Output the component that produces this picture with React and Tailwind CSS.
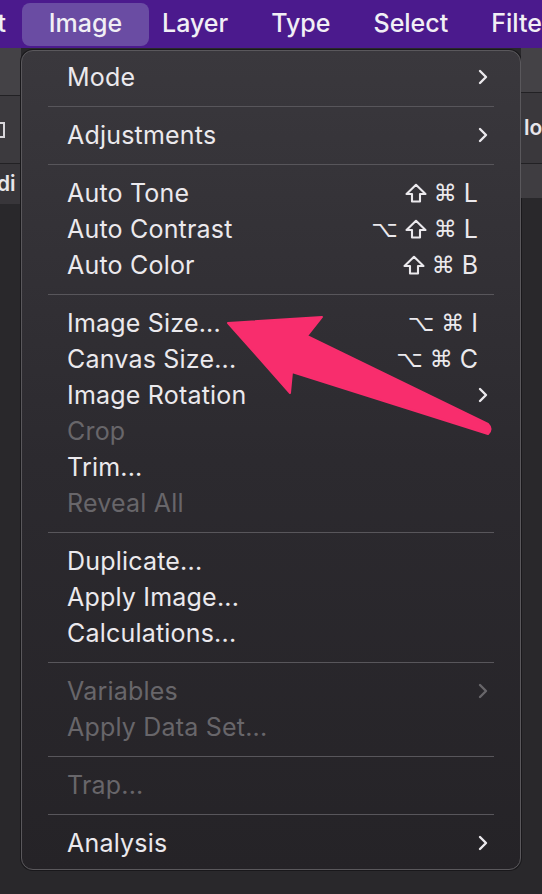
import React from "react";

const font = { fontFamily: "Inter, 'Noto Sans', sans-serif" };

function Chevron({ dim }) {
  return (
    <svg width="10" height="16" viewBox="0 0 10 16" className="block">
      <polyline
        points="2,2 8,8 2,14"
        fill="none"
        stroke={dim ? "#68666a" : "#ebe9ed"}
        strokeWidth="2.4"
        strokeLinecap="round"
        strokeLinejoin="round"
      />
    </svg>
  );
}

function ShiftIcon({ color }) {
  return (
    <svg width="22" height="20" viewBox="0 0 22 20" className="block">
      <path
        d="M11 1.8 L20.5 11 L15 11 L15 18.5 L7 18.5 L7 11 L1.5 11 Z"
        fill="none"
        stroke={color}
        strokeWidth="2.1"
        strokeLinejoin="round"
      />
    </svg>
  );
}

function Shortcut({ keys, dim }) {
  const color = dim ? "#68666a" : "#ebe9ed";
  return (
    <div className="flex items-center gap-[7px] mr-[10px]" style={{ color }}>
      {keys.map((k, i) => {
        if (k === "⇧") return <ShiftIcon key={i} color={color} />;
        if (/[A-Z]/.test(k))
          return (
            <span key={i} className="text-[25px] leading-none" style={font}>
              {k}
            </span>
          );
        return (
          <span key={i} className="text-[23px] leading-none" style={{ fontFamily: "'DejaVu Sans', sans-serif" }}>
            {k}
          </span>
        );
      })}
    </div>
  );
}

function Item({ label, dim, sub, keys }) {
  return (
    <div className="h-[36px] flex items-center pl-[45px] pr-[32px]">
      <span className={`flex-1 text-[25px] leading-none tracking-[0.2px] ${dim ? "text-[#68666a]" : "text-[#ebe9ed]"}`}>{label}</span>
      {keys && <Shortcut keys={keys} dim={dim} />}
      {sub && <Chevron dim={dim} />}
    </div>
  );
}

function Sep() {
  return (
    <div className="h-[22px] flex items-center px-[26px]">
      <div className="h-px flex-1 bg-[#58565b]" />
    </div>
  );
}

export default function App() {
  return (
    <div className="relative w-[542px] h-[894px] overflow-hidden bg-[#29282b]" style={font}>
      {/* menu bar */}
      <div className="h-[48px] bg-[#4b1a8d] flex items-center text-[25px] text-[#f1eff5] font-medium whitespace-nowrap">
        <div className="w-[6px] flex justify-end overflow-visible">
          <span>t</span>
        </div>
        <div className="ml-[16px] w-[127px] h-[43px] shrink-0 rounded-[8px] bg-[#6a4ca3] flex items-center justify-center">
          Image
        </div>
        <span className="ml-[13px]">Layer</span>
        <span className="ml-[43px]">Type</span>
        <span className="ml-[43px]">Select</span>
        <span className="ml-[43px]">Filter</span>
      </div>

      <div className="flex">
        {/* left strip */}
        <div className="w-[21px] flex flex-col">
          <div className="h-[47px] bg-[#444246]" />
          <div className="h-px bg-[#222124]" />
          <div className="h-[67px] bg-[#3c3a3e] flex items-center">
            <div className="w-[5px] h-[16px] border-2 border-l-0 border-[#d8d6da]" />
          </div>
          <div className="h-px bg-[#222124]" />
          <div className="h-[40px] bg-[#38363a] flex items-center text-[21px] text-[#e8e6ea] font-semibold overflow-hidden">
            <span className="ml-[-3px]">di</span>
          </div>
        </div>

        {/* menu */}
        <div className="mt-[2px] w-[500px] h-[820px] rounded-[12px] border border-[#5a585c] shadow-[0_0_0_1px_#19181b] bg-linear-to-b from-[#3a383d] via-[#2c2a2f] to-[#252327] py-[8px] flex flex-col">
          <Item label="Mode" sub />
          <Sep />
          <Item label="Adjustments" sub />
          <Sep />
          <Item label="Auto Tone" keys={["⇧", "⌘", "L"]} />
          <Item label="Auto Contrast" keys={["⌥", "⇧", "⌘", "L"]} />
          <Item label="Auto Color" keys={["⇧", "⌘", "B"]} />
          <Sep />
          <Item label="Image Size..." keys={["⌥", "⌘", "I"]} />
          <Item label="Canvas Size..." keys={["⌥", "⌘", "C"]} />
          <Item label="Image Rotation" sub />
          <Item label="Crop" dim />
          <Item label="Trim..." />
          <Item label="Reveal All" dim />
          <Sep />
          <Item label="Duplicate..." />
          <Item label="Apply Image..." />
          <Item label="Calculations..." />
          <Sep />
          <Item label="Variables" dim sub />
          <Item label="Apply Data Set..." dim />
          <Sep />
          <Item label="Trap..." dim />
          <Sep />
          <Item label="Analysis" sub />
        </div>

        {/* right strip */}
        <div className="flex-1 flex flex-col overflow-hidden">
          <div className="h-[44px] bg-[#444246]" />
          <div className="h-px bg-[#222124]" />
          <div className="h-[70px] bg-[#3a383c] flex items-center text-[21px] text-[#e8e6ea] font-semibold whitespace-nowrap">
            <span className="ml-[3px]">lor</span>
          </div>
          <div className="h-px bg-[#222124]" />
          <div className="h-[34px] bg-[#3f3d41]" />
        </div>
      </div>

      {/* arrow annotation */}
      <svg className="absolute top-0 left-0 pointer-events-none" width="542" height="894" viewBox="0 0 542 894">
        <path
          d="M228 323 L322 317 L307 336 L488 424 Q493 429 488 434 L292 372 L290 393 Z"
          fill="#f82d6d"
          stroke="#f82d6d"
          strokeWidth="2"
          strokeLinejoin="round"
        />
      </svg>
    </div>
  );
}
